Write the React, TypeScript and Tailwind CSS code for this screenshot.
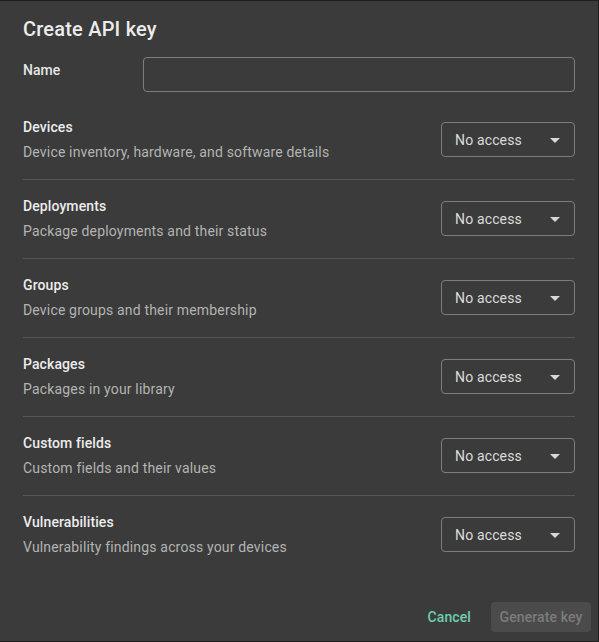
const SCOPES = [
  { name: "Devices", desc: "Device inventory, hardware, and software details" },
  { name: "Deployments", desc: "Package deployments and their status" },
  { name: "Groups", desc: "Device groups and their membership" },
  { name: "Packages", desc: "Packages in your library" },
  { name: "Custom fields", desc: "Custom fields and their values" },
  { name: "Vulnerabilities", desc: "Vulnerability findings across your devices" },
];

function AccessSelect() {
  return (
    <div className="flex h-[35px] w-[134px] shrink-0 items-center justify-between rounded-[4px] border border-[#7c7d7c] pl-[13px] pr-[14px] text-[14px] tracking-[0.15px] text-[#dcdcdc]">
      <span className="pt-[1px]">No access</span>
      <svg width="10" height="5" viewBox="0 0 10 5" className="mt-[1px]">
        <path d="M0 0h10L5 5z" fill="#d8d8d8" />
      </svg>
    </div>
  );
}

export default function App() {
  return (
    <div
      className="flex h-[642px] w-[599px] flex-col border-t border-r border-b border-[#1e1f1e] bg-[#3a3b3a]"
      style={{ fontFamily: "Roboto, 'Noto Sans', sans-serif" }}
    >
      <div className="px-[23px] pt-[14px]">
        <h2 className="text-[20px] leading-[28px] font-medium tracking-[0.2px] text-[#ececec]">Create API key</h2>

        <div className="mt-[14px] flex items-start">
          <label className="w-[120px] pt-[3px] text-[14px] leading-[20px] font-medium text-[#e6e6e6]">Name</label>
          <input
            type="text"
            className="h-[35px] flex-1 rounded-[4px] border border-[#7c7d7c] bg-transparent px-3 text-[14px] text-[#e6e6e6] outline-none"
          />
        </div>

        <div className="mt-[9px]">
          {SCOPES.map((s, i) => (
            <div
              key={s.name}
              className={`flex items-center justify-between pt-[16px] pb-[17px] ${
                i < SCOPES.length - 1 ? "border-b border-[#555655]" : ""
              }`}
            >
              <div>
                <div className="text-[14px] leading-[20px] font-medium tracking-[0.1px] text-[#ececec]">{s.name}</div>
                <div className="mt-[5px] text-[14px] leading-[20px] tracking-[0.17px] text-[#b3b4b3]">{s.desc}</div>
              </div>
              <AccessSelect />
            </div>
          ))}
        </div>
      </div>

      <div className="mt-auto flex items-center justify-end gap-[8px] pr-[7px] pb-[9px]">
        <button className="h-[30px] px-[12px] text-[14px] font-medium tracking-[0.1px] text-[#6fcdb0]">Cancel</button>
        <button
          disabled
          className="h-[30px] w-[100px] rounded-[4px] bg-[#4a4b4a] text-[14px] font-medium tracking-[0.1px] text-[#7b7c7b]"
        >
          Generate key
        </button>
      </div>
    </div>
  );
}
